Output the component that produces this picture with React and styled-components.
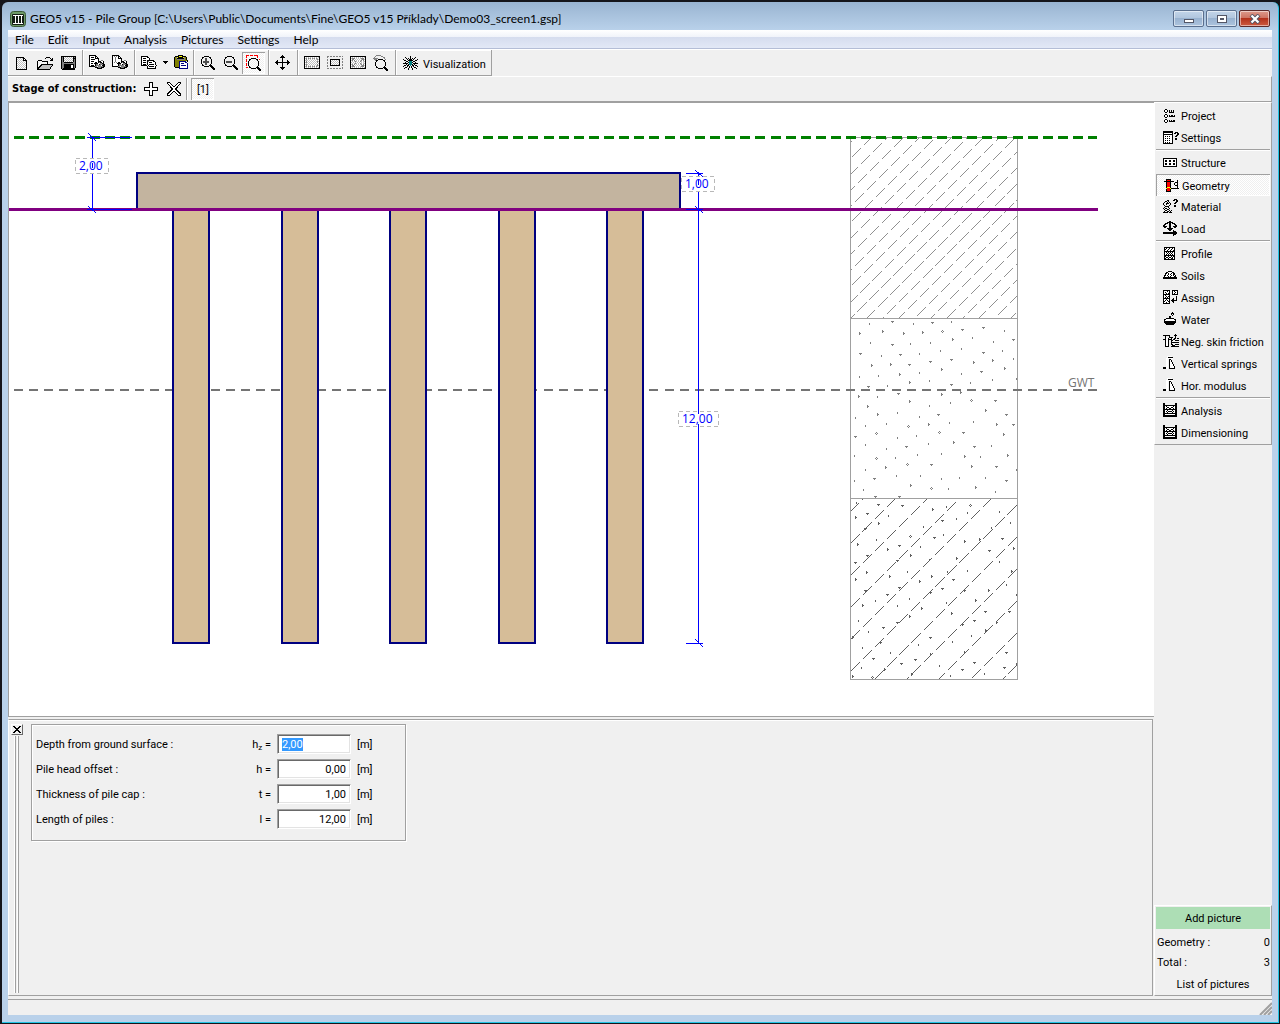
import React, { useEffect, useRef } from "react";
import styled, { createGlobalStyle, css } from "styled-components";

const face = "#f0f0f0";
const shade = "#a0a0a0";
const uiFont = `Roboto, "Liberation Sans", sans-serif`;
const shellFont = `Lato, Roboto, sans-serif`;
const drawingFont = `"Open Sans", "Noto Sans", sans-serif`;
const dither = `repeating-conic-gradient(#ffffff 0 25%, #efefef 0 50%) 0 0 / 2px 2px`;

const GlobalStyle = createGlobalStyle`
  *, *::before, *::after { box-sizing: border-box; }
  body { margin: 0; background: #15151a; font: 11px/14px ${uiFont}; color: #000; }
  button, input { font: inherit; color: inherit; margin: 0; }
  button { background: none; border: 0; padding: 0; cursor: default; }
`;

/* ---------- window shell ---------- */

const Desktop = styled.div`
  height: 100vh;
  min-height: 640px;
  display: flex;
  padding: 2px 1px 1px 2px;
  background: #15151a;
`;

const WindowFrame = styled.div`
  flex: 1;
  min-width: 0;
  display: flex;
  flex-direction: column;
  padding: 0 6px 7px;
  border-right: 1px solid #22c4e4;
  border-bottom: 1px solid #22c4e4;
  border-radius: 6px 6px 0 0;
  background: linear-gradient(#99b4d1 0, #b9d1ea 28px);
`;

const TitleBar = styled.header`
  display: flex;
  align-items: center;
  gap: 4px;
  height: 28px;
  padding: 5px 2px 0;
  font: 12px/16px ${shellFont};
`;

const TitleText = styled.h1`
  flex: 1;
  margin: 0;
  font: inherit;
  white-space: nowrap;
  overflow: hidden;
`;

const CaptionButtons = styled.div`
  display: flex;
  gap: 2px;
`;

const CaptionButton = styled.button`
  display: grid;
  place-items: center;
  width: 31px;
  height: 17px;
  border: 1px solid ${(p) => (p.$danger ? "#5c2a2a" : "#5a6f8e")};
  border-radius: 2px;
  box-shadow: inset 0 0 0 1px rgba(255, 255, 255, 0.5);
  background: ${(p) =>
    p.$danger
      ? "linear-gradient(#dc9a8c 0, #cf7463 45%, #b3321c 50%, #cd5a40 100%)"
      : "linear-gradient(#c3d5e9 0, #b1c6de 45%, #98b2d0 50%, #adc4de 100%)"};
`;

const MenuBar = styled.nav`
  display: flex;
  height: 20px;
  border-bottom: 1px solid #ffffff;
  box-shadow: inset 0 -1px 0 #b4bdd6;
  background: linear-gradient(#ffffff 0, #f0f3fa 7px, #d5dcee 7px, #e2e8f6 18px);
  font: 12px/18px ${shellFont};
`;

const MenuItem = styled.button`
  padding: 1px 7px 0;
`;

/* ---------- toolbars ---------- */

const ToolBar = styled.div`
  display: flex;
  height: 26px;
  background: ${face};
`;

const ToolGroup = styled.div`
  display: flex;
  align-items: center;
  padding: 0 ${(p) => (p.$tight ? 0 : 3)}px 0 2px;
  border-right: 1px solid ${shade};
  border-bottom: 1px solid ${shade};
  box-shadow: inset 1px 1px 0 #ffffff;
`;

const pressed = css`
  background: ${dither};
  box-shadow: inset 1px 1px 0 ${shade}, inset -1px -1px 0 #ffffff;
`;

const ToolButton = styled.button`
  display: flex;
  align-items: center;
  justify-content: center;
  gap: 4px;
  width: ${(p) => (p.$wide ? "auto" : p.$narrow ? "10px" : "23px")};
  height: 22px;
  padding: ${(p) => (p.$wide ? "2px 2px 0 5px" : "0")};
  ${(p) => p.$pressed && pressed}
`;

const StageBar = styled.div`
  display: flex;
  align-items: center;
  height: 26px;
  padding-left: 4px;
  border-top: 1px solid #ffffff;
  border-right: 1px solid ${shade};
  border-bottom: 1px solid ${shade};
  background: ${face};
`;

const StageLabel = styled.span`
  padding-right: 3px;
  font: bold 11px/14px "DejaVu Sans Condensed", "Noto Sans", sans-serif;
`;

const StageRule = styled.span`
  width: 2px;
  height: 22px;
  margin: 0 3px 0 1px;
  border-left: 1px solid ${shade};
  border-right: 1px solid #ffffff;
`;

/* ---------- work area ---------- */

const WorkArea = styled.div`
  flex: 1;
  min-height: 0;
  display: grid;
  grid-template-columns: minmax(0, 1fr) 118px;
  background: ${face};
`;

const MainColumn = styled.main`
  display: flex;
  flex-direction: column;
  min-height: 0;
`;

const Canvas = styled.section`
  flex: 1;
  min-height: 0;
  display: flex;
  border: 1px solid ${shade};
  border-right: 0;
  background: #ffffff;
`;

const Drawing = styled.svg`
  flex: 1;
  min-width: 0;
  min-height: 0;
  display: block;
  font: 12px ${drawingFont};
`;

const InputPanel = styled.section`
  flex: none;
  display: flex;
  align-items: stretch;
  gap: 8px;
  height: 277px;
  margin: 2px 1px 0 0;
  padding: 4px 3px 2px 2px;
  border: 1px solid ${shade};
  border-left-color: #ffffff;
  box-shadow: inset 0 1px 0 #ffffff;
`;

const Rail = styled.div`
  display: flex;
  flex-direction: column;
  align-items: center;
  gap: 1px;
  width: 12px;
`;

const CloseButton = styled.button`
  display: grid;
  place-items: center;
  width: 12px;
  height: 11px;
  border: 1px solid;
  border-color: #ffffff #696969 #696969 #ffffff;
`;

const Grip = styled.div`
  flex: 1;
  width: 6px;
  background: linear-gradient(90deg, #ffffff 1px, ${shade} 1px 2px, ${face} 2px 3px, #ffffff 3px 4px, ${shade} 4px 5px, ${face} 5px);
`;

const FieldGroup = styled.fieldset`
  display: flex;
  flex-direction: column;
  gap: 5px;
  align-self: flex-start;
  width: 375px;
  min-width: 0;
  margin: 0;
  padding: 9px 4px 11px;
  border: 1px solid ${shade};
  box-shadow: inset 1px 1px 0 #ffffff, 1px 1px 0 #ffffff;
`;

const FieldRow = styled.div`
  display: grid;
  grid-template-columns: 168px 61px 74px auto;
  column-gap: 6px;
  align-items: center;
  height: 20px;
`;

const FieldLabel = styled.label`
  padding-top: 2px;
`;

const FieldNote = styled.span`
  padding-top: 2px;
  text-align: ${(p) => (p.$end ? "right" : "left")};
  sub { font-size: 8px; line-height: 1px; vertical-align: -2px; }
`;

const NumberField = styled.input`
  width: 100%;
  height: 20px;
  padding: 1px 4px 0;
  border: 1px solid;
  border-color: ${shade} #ffffff #ffffff ${shade};
  box-shadow: inset 1px 1px 0 #696969, inset -1px -1px 0 #e3e3e3;
  border-radius: 0;
  outline: 0;
  background: #ffffff;
  text-align: ${(p) => (p.$editing ? "left" : "right")};
  &::selection { background: #3399ff; color: #ffffff; }
`;

/* ---------- side column ---------- */

const SideColumn = styled.aside`
  display: flex;
  flex-direction: column;
  justify-content: space-between;
  min-height: 0;
`;

const SidePanel = styled.div`
  padding: 2px 1px 0;
  border: 1px solid;
  border-color: #ffffff ${shade} ${shade} #ffffff;
`;

const ModeGroup = styled.div`
  & + & {
    padding-top: 3px;
    background: linear-gradient(${shade} 1px, #ffffff 1px, #ffffff 2px, transparent 2px);
  }
`;

const ModeButton = styled.button`
  display: flex;
  align-items: center;
  gap: 2px;
  width: 100%;
  height: 22px;
  padding: ${(p) => (p.$active ? "1px 0 0 8px" : "0 0 0 7px")};
  white-space: nowrap;
  ${(p) => p.$active && pressed}
`;

const ModeLabel = styled.span`
  padding-top: 2px;
`;

const PicturePanel = styled(SidePanel)`
  display: flex;
  flex-direction: column;
  padding: 1px 1px 0;
`;

const AddPicture = styled.button`
  height: 22px;
  padding-top: 2px;
  margin-bottom: 3px;
  background: #addeb5;
`;

const CountRow = styled.div`
  display: flex;
  justify-content: space-between;
  align-items: center;
  height: 20px;
  padding: 2px 0 0 1px;
`;

const ListButton = styled.button`
  height: 23px;
  padding-top: 2px;
`;

const StatusBar = styled.footer`
  display: flex;
  justify-content: flex-end;
  align-items: flex-end;
  height: 19px;
  border-top: 3px solid ${face};
  background: linear-gradient(${shade} 1px, ${face} 1px);
`;

const Glyph = styled.svg`
  flex: none;
  display: block;
  fill: none;
  stroke: #000;
  stroke-width: 1;
  shape-rendering: ${(p) => (p.$smooth ? "auto" : "crispEdges")};
`;

/* ---------- icons ---------- */

const Icon = ({ children, w = 16, h = 16, smooth }) => (
  <Glyph width={w} height={h} viewBox={`0 0 ${w} ${h}`} aria-hidden="true" $smooth={smooth}>
    {children}
  </Glyph>
);

const inks = {
  "#": "#000000", g: "#808080", d: "#505050", w: "#ffffff", r: "#ff0000",
  y: "#ffff00", t: "#008080", o: "#808000", b: "#000080", s: "#c0c0c0",
};

// Bitmap icon: each string is one row of pixels, "." is transparent.
const Bits = ({ rows, w = 16, h = 16 }) => {
  const out = [];
  rows.forEach((row, y) => {
    let x = 0;
    while (x < row.length) {
      const c = row[x];
      let end = x + 1;
      while (end < row.length && row[end] === c) end += 1;
      if (inks[c]) out.push(<rect key={`${x}-${y}`} x={x} y={y} width={end - x} height={1} fill={inks[c]} stroke="none" />);
      x = end;
    }
  });
  return <Icon w={w} h={h}>{out}</Icon>;
};

const bitmaps = {
  page: [
    "", "", "..########......", "..#wswsws##.....", "..#swswsw#w#....", "..#wswsws####...", "..#swswswsws#...",
    "..#wswswswsw#...", "..#swswswsws#...", "..#wswswswsw#...", "..#swswswsws#...", "..#wswswswsw#...", "..#swswswsws#...",
    "..#wswswswsw#...", "..###########...",
  ],
  open: [
    "", "", ".........####...", "........#....#.#", "..............##", ".####........###", "#w.w.######.....",
    "#.w.w.w.w.#.....", "#w.w.w.w.w#.....", "#.w.############", "#w.##ssssssssss#", "#.##ssssssssss#.", "###ssssssssss#..",
    "##sssssssssss#..", "#############...",
  ],
  save: [
    "", ".###############", ".#g#wswswswsw#g#", ".#g#swswswsws###", ".#g#wswswswsw#g#", ".#g#swswswsws#g#", ".#g#wswswswsw#g#",
    ".#gg#########gg#", ".#ggggggggggggg#", ".#gg##########g#", ".#gg#######ww#g#", ".#gg#######ww#g#", ".#gg#######ww#g#",
    ".#g############.", "..#############.",
  ],
  print: [
    "#######.........", "#wwwww##........", "#w###w#w#.......", "#wwwww####......", "#w####www#......", "#wwwwwwww#..gg..",
    "#w###wwww###ww#.", "#wwwww##w#g##w#.", "#w##w####wwgg##.", "#wwwww#ggw#ggg##", "#w###w#gggggw###", "######ggwggggg##",
    "......###ggg###.", "........#####...",
  ],
  printStage: [
    "#######.........", "#wgwgw##........", "#wwgww#w#.......", "#wwgww####......", "#wwgwwwww#......", "#wwgwwwww#..gg..",
    "#wwgwwwww###ww#.", "#wgwgw##w#g##w#.", "#wwww####wwgg##.", "#wwwww#ggw#ggg##", "#wwwww#gggggw###", "######ggwggggg##",
    "......###ggg###.", "........#####...",
  ],
  copy: [
    "", "#######.........", "#wwwww##........", "#w###www#.......", "#wwwwwww#.......", "#w###.#######...", "#wwww.#gwwww##..",
    "#w###.#w###www#.", "#wwww.#wwwwwww#.", "#w###.#w#####w#.", "######.#wwwwwww#", "......#w#####w#.", "......#wwwwwww#.",
    "......#########.",
  ],
  paste: [
    "....#####.......", ".####yyy####....", "#ogy#####ygo#...", "#og#######go#...", "#ooggggggggo#...", "#oooooooooooo#..", "#oooobbbbbbb.#..",
    "#oooobwwwwwbb...", "#oooobwbbbwwwb..", "#oooobwwwwwwwb..", "#oooobwbbbbbwb..", "#oooobwwwwwwwb..", ".####bwwwwwwwb..",
    ".....bbbbbbbbb..",
  ],
  zoomIn: [
    "", "....#####.......", "..##.....##.....", "..#..dd...#.....", ".#...dd....#....", ".#...dd....#....", ".#.dddddd..#....",
    ".#.dddddd..#....", ".#...dd....#....", "..#..dd...#.....", "..##.....###....", "....#####.###...", "...........###..",
    "............###.", ".............##.",
  ],
  zoomOut: [
    "", "....#####.......", "..##.....##.....", "..#.......#.....", ".#.........#....", ".#.........#....", ".#.dddddd..#....",
    ".#.dddddd..#....", ".#.........#....", "..#.......#.....", "..##.....###....", "....#####.###...", "...........###..",
    "............###.", ".............##.",
  ],
  zoomBox: [
    "rrr.rrr.rrrr....", "r..........r....", "r..........r....", ".....#####......", "r..##.....##.r..", "r..#.......#....", "r.#.........#...",
    "..#.........#...", "r.#.........#...", "r.#.........#...", "r.#.........#...", "...#.......#....", "rr.##.....###...",
    ".....#####.###..", "............###.", ".............##.",
  ],
  zoomBack: [
    "...ggggg........", "..g.....gg......", ".g........gg....", "ggggg......g....", ".ggg.#####..g...", "..g##.....##....", "...#.......#....",
    "..#.........#...", "..#.........#...", "..#.........#...", "..#.........#...", "...#.......#....", "...##.....###...",
    ".....#####.###..", "............###.", ".............##.",
  ],
  move: [
    ".......#........", "......###.......", ".....#####......", ".......#........", ".......#........", "..#....#....#...", ".##....#....##..",
    "###############.", ".##....#....##..", "..#....#....#...", ".......#........", ".......#........", ".....#####......", "......###.......",
    ".......#........",
  ],
  window: [
    "", "################", "#wswswswswswsws#", "#sgwgsgwgsgwgsw#", "#wgwswswswswsgs#", "#ssswswswswswsw#", "#wgwswswswswsgs#",
    "#sgswswswswswgw#", "#wswswswswswsws#", "#sgswswswswswgw#", "#wgwswswswswsgs#", "#sgwgsgwgsgwgsw#", "#wswswswswswsws#",
    "################",
  ],
  focus: [
    "", "gg.gg.gg.gg.gg.g", "g...............", "...............g", "g..##########..g", "g..#wswswsws#...", "...#swswswsw#..g",
    "g..#wswswsws#..g", "g..#swswswsw#...", "...#wswswsws#..g", "g..##########..g", "g...............", "...............g",
    "gg.gg.gg.gg.gg.g",
  ],
  expand: [
    "", "################", "#wswswswswswsws#", "#sgggwswswsgggw#", "#wggwswswswsggs#", "#sgwgwswswsgwgw#", "#wswsgswswgswss#",
    "#swswswswswswsw#", "#wswsgswswgswss#", "#sgwgwswswsgwgw#", "#wggwswswswsggs#", "#sgggwswswsgggw#", "#wswswswswswsws#",
    "################",
  ],
  visual: [
    ".......#........", "..#....#....#...", "...#.#.#.#.#....", "#...#.###.#...#.", ".##..#####..##..", "...##.ttt.##....", "..#..#ttt#..#...",
    "#####.ttt.#####.", "...#.#ttt#.#....", ".##.##.t.##.##..", "#...#.#.#.#...#.", "..##..#.#..##...", ".#...#...#...#..",
    ".....#...#......",
  ],
  project: [
    "", "..##............", ".#ww#.#.#.#.....", ".#ww#.#.#.#.....", "..##..#####.....", "................", "..##............", ".#ww#.#.##.#....",
    ".#ww#.######....", "..##............", "................", "..##............", ".#ww#.#.#.##....", ".#ww#.######....", "..##............",
  ],
  settings: [
    "", "##########......", "##########..###.", "#wwwwwwww#.##.##", "##########....##", "#wwwwwwww#...##.", "#w#w#w#ww#..##..",
    "#wwwwwwww#......", "#w#w#w#ww#..##..", "#wwwwwwww#..##..", "#w#w#w#ww#......", "#wwwwwwww#......", "#w#w#w#ww#......", "##########......",
  ],
  structure: [
    "", "", "", "##############..", "#wwwwwwwwwwww#..", "#w##ww##ww##w#..", "#w##ww##ww##w#..", "#wwwwwwwwwwww#..", "#w##ww##ww##w#..",
    "#w##ww##ww##w#..", "#wwwwwwwwwwww#..", "##############..",
  ],
  geometry: [
    "", "..#####.........", "..#rrr#......#..", "##########...#..", "..#rrr#....###..", "..#rrr#...#..#..", "..#rrr#...#..#..",
    "..#rrr#....###..", "..#rrr#......#..", "..#yyy#......#..", "..yrrry########.", "..#rrr#.........", "..#rrr#.........", "..#####.........",
  ],
  material: [
    "...........###..", "....##....##.##.", "..##.#.......##.", ".#..#.#.....##..", "#..###.#...##...", "#..#...#........", ".#....#....##...",
    "..####.....##...", ".#...#..........", "#.##..#.........", ".#..##..........", "..##..#.#.......", ".#..##.#........", "#####.###.......",
  ],
  load: [
    "......##........", "....######......", "..###.##.###....", ".##...##...##...", "##....##....##..", "####..##..####..", ".##...##...##...",
    "....######......", ".....####.......", "......##..#.....", "..........###...", "##############..", "##############..", "..........###...",
    "..........#.....",
  ],
  profile: [
    "", ".###########....", ".#w#ww#ww#w#....", ".##ww#ww#ww#....", ".#ww#ww#ww##....", ".###########....", ".#w#w#w#w#w#....", ".#ww#w#w#ww#....",
    ".#w#w#w#w#w#....", ".###########....", ".##ww#ww#w##....", ".#w##w##w#w#....", ".##ww#ww##w#....", ".###########....",
  ],
  soils: [
    "", "", "", ".....####.......", "...##wwww##.....", "..##w#ww#w##....", "..#ww#w#ww##....", ".##w#www#w#w#...", ".#www#w#www##...",
    "##############..", "##############..",
  ],
  assign: [
    "#######..######.", "#www#w#..#w#ww#.", "#w#www#..#ww#w#.", "#ww#w##..#w#ww#.", "#######..######.", "#w#www#.........", "#ww#w##......#..",
    "#w#w#w#......#..", "#######...#..#..", "#ww#ww#..##..#..", "#w#w#w#.######..", "##www##..##.....", "#ww#ww#...#.....", "#######.........",
  ],
  water: [
    ".........#......", "........###.....", "........#w#.....", ".........#......", "......##........", "......##........", "...########.....",
    ".##wwwwwwww##...", ".#wwwwwwwwww#...", ".############...", ".############...", "..##########....", "...########.....", "................",
  ],
  friction: [
    "............#...", "#######....###..", "..#...#.....#...", "..#...####..#...", "..#ww#..#..##.##", "###ww####.##....", "..#ww#..##..####",
    "..#ww#..#.......", "..#ww#..########", "..#ww#..#.......", "..#ww#..##..####", "..#ww#...###....", "..####..########",
  ],
  springs: [
    "....wwwww.......", "....w#####......", "...wwwwwww......", "...ww.##........", "...ww.#w#.......", "...ww.#w#.......", "...ww.#ww#......",
    "...ww.#ww#......", "...ww.#www#.....", "...ww.#www#.....", "...ww.#wwww#....", "###ww.#wwww#....", "###ww.######....",
  ],
  analysis: [
    "##..........##..", "##..........##..", "##############..", "##w#wwwwww#w##..", "##ww##ww##ww##..", "##w#ww##ww#w##..", "##############..",
    "##ww#wwww#ww##..", "##w#w####w#w##..", "##ww#wwww#ww##..", "##############..", "##wwwwwwwwww##..", "##############..", "##############..",
  ],
};

const AppIcon = () => (
  <Icon smooth>
    <rect x="0.500" y="0.500" width="15" height="15" rx="3" fill="#6f9a68" stroke="#3a5a38" />
    <rect x="2" y="3" width="12" height="11" rx="1" fill="#141c14" stroke="none" />
    <path d="M3 4.500h10M3 12.500h10M5 5v7M8 5v7M11 5v7" stroke="#fff" shapeRendering="crispEdges" />
  </Icon>
);

/* ---------- data ---------- */

const menus = ["File", "Edit", "Input", "Analysis", "Pictures", "Settings", "Help"];

const modes = [
  [["Project", "project"], ["Settings", "settings"]],
  [["Structure", "structure"], ["Geometry", "geometry"], ["Material", "material"], ["Load", "load"]],
  [
    ["Profile", "profile"], ["Soils", "soils"], ["Assign", "assign"], ["Water", "water"],
    ["Neg. skin friction", "friction"], ["Vertical springs", "springs"], ["Hor. modulus", "springs"],
  ],
  [["Analysis", "analysis"], ["Dimensioning", "analysis"]],
];

const fields = [
  { id: "depth", label: "Depth from ground surface :", symbol: <>h<sub>z</sub> =</>, value: "2,00" },
  { id: "offset", label: "Pile head offset :", symbol: "h =", value: "0,00" },
  { id: "cap", label: "Thickness of pile cap :", symbol: "t =", value: "1,00" },
  { id: "piles", label: "Length of piles :", symbol: "l =", value: "12,00" },
];

// Soil symbols: d = grain, v / r = stone pointing down / right, o = pebble.
const sand = `d19,5 v42,3 d63,5 v82,4 d101,3 v112,11 v133,9 d154,12 r9,15 r32,13 r53,15 r72,14 o92,13 r102,21 d122,19 v163,21 d143,23
d20,24 v42,26 d60,25 d80,24 d111,30 d90,32 d152,32 v10,35 d31,37 v50,36 d69,35 v133,34 v101,41 v80,43 r142,42 r123,44 d163,40 r21,47
r40,46 v59,46 r91,51 d69,54 d111,55 v131,53 r154,50 d9,58 d28,57 r49,56 d79,62 d142,61 d166,60 r59,64 d120,64 v101,66 v18,68 d37,67
v48,75 r91,76 r110,74 r8,78 d27,78 r59,83 d79,87 o121,82 v145,82 d100,84 r17,88 d47,94 r135,92 v156,96 v88,96 r27,96 d5,99 d69,98
d123,103 d99,104 d36,105 r78,106 r146,106 v163,106 o58,108 v5,118 d15,107 o26,115 d47,119 d66,117 o89,114 v113,114 r153,116 r103,124
d78,125 v56,128 v124,128 d141,127 d15,126 d36,130 r114,138 d91,135 d67,136 d130,138 r157,137 d4,137 o26,140 d45,139 o57,146 v81,146
v146,148 r121,148 d15,151 r35,149 d166,151 d46,157 d70,157 d91,160 v24,160 d4,162 d109,159 d135,159 v156,162 r60,167 o81,170 d98,170
r125,169 d13,171 d145,173 v25,178 v49,178`;

const clayeySand = `v28,6 v52,7 o120,7 d6,4 v17,15 r5,19 d38,17 r82,11 d96,8 d149,13 d117,14 d106,20 v92,22 r28,25 v15,30 d73,28 d160,24
d141,29 v152,40 o60,38 v84,39 d93,36 d26,41 r7,46 v49,47 d70,48 r114,43 r129,41 v139,52 r163,50 v17,57 r37,51 v5,64 r60,57 v47,62 d79,61
r106,60 d149,63 r16,74 r39,78 d57,73 r81,78 d97,73 v103,81 d117,72 r161,73 r5,81 r69,83 v49,89 v92,90 v15,92 v37,96 v80,94 r114,92
r138,92 d156,86 r12,107 d25,102 r125,102 d59,100 d47,107 r71,110 d96,104 v135,113 d166,96 r101,115 r59,118 v159,113 v124,122 d8,122
v47,124 v33,129 v112,126 r135,132 r146,124 d18,133 v80,139 d102,143 d121,137 r2,139 r30,144 d12,149 d40,154 d68,146 v23,160 r114,154
r80,156 v156,154 v65,161 v51,165 v124,164 v112,171 v154,169 d11,169 r61,176 r34,171 d89,167 o22,179 r2,178 d100,177 d134,175 d166,165`;

const symbolPaths = {
  d: "h1v2h-1z",
  v: "m-1 0h3v1h-1v1h-1v-1h-1z",
  r: "m0 -1h1v1h1v1h-1v1h-1z",
  o: "m0 -1h1v1h-1z m-1 1h1v1h-1z m2 0h1v1h-1z m-1 1h1v1h-1z",
};

const toPath = (text, dx, dy) =>
  text
    .split(/\s+/)
    .map((item) => {
      const [x, y] = item.slice(1).split(",").map(Number);
      return `M${x + dx} ${y + dy}${symbolPaths[item[0]]}`;
    })
    .join("");

const pileLeft = [173, 282, 390, 499, 607];

const hatch = (first, step, top, bottom, phase) => {
  const lines = [];
  let i = 0;
  for (let c = first; c < 1018 + bottom; c += step) {
    lines.push(<path key={c} d={`M${c - bottom} ${bottom}L${c - top} ${top}`} strokeDashoffset={-((i * phase) % 17)} />);
    i += 1;
  }
  return lines;
};

const Dimension = ({ x, y, w, label }) => (
  <g>
    <rect x={x + 0.5} y={y + 0.5} width={w} height="15" fill="#fff" stroke="#b8b8b8" strokeDasharray="4 3" shapeRendering="crispEdges" />
    <text x={x + 4} y={y + 12} fill="#0000ff">{label}</text>
  </g>
);

const PileDrawing = () => (
  <Drawing viewBox="9 103 1145 613" preserveAspectRatio="xMinYMin meet" role="img" aria-label="Pile group section">
    <defs>
      <clipPath id="layer1"><rect x="851" y="138" width="166" height="180" /></clipPath>
      <clipPath id="layer3"><rect x="851" y="499" width="166" height="180" /></clipPath>
    </defs>
    <g clipPath="url(#layer1)" stroke="#909090" strokeDasharray="13 4" shapeRendering="crispEdges">{hatch(993, 16, 137, 318, 7)}</g>
    <path d={toPath(sand, 850, 318)} fill="#808080" shapeRendering="crispEdges" />
    <g clipPath="url(#layer3)" stroke="#606060" strokeDasharray="13 4" shapeRendering="crispEdges">{hatch(1362, 32, 498, 680, 6)}</g>
    <path d={toPath(clayeySand, 850, 498)} fill="#606060" shapeRendering="crispEdges" />
    <path d="M850.500 137.500h167v542h-167zM850.500 318.500h167M850.500 498.500h167" fill="none" stroke="#a0a0a0" shapeRendering="crispEdges" />
    <g fill="none" shapeRendering="crispEdges">
      <path d="M14 137.500H1097" stroke="#008000" strokeWidth="3" strokeDasharray="10 5.130" />
      <path d="M14 390H1097" stroke="#747474" strokeWidth="2" strokeDasharray="9 6.130" />
      {pileLeft.map((x) => (
        <rect key={x} x={x} y="209" width="36" height="434" fill="#d6bd98" stroke="#000080" strokeWidth="2" />
      ))}
      <rect x="137" y="173" width="543" height="37" fill="#c3b49f" stroke="#000080" strokeWidth="2" />
      <path d="M9 209.500H1098" stroke="#800080" strokeWidth="3" />
      <path d="M92.500 137v72M87 137.500h45M87 209.500h45M698.500 173v470M686 173.500h17M686 209.500h17M686 643.500h17" stroke="#0000ff" />
      <path d="M88 133l8 8M88 206l8 7M695 170l8 7M695 206l8 7M695 639l8 8" stroke="#0000ff" />
    </g>
    <Dimension x={75} y={158} w={33} label="2,00" />
    <Dimension x={681} y={176} w={33} label="1,00" />
    <Dimension x={678} y={411} w={40} label="12,00" />
    <path d="M92.500 163v5M698.500 180v5M698.500 411v3M698.500 424v3" stroke="#0000ff" shapeRendering="crispEdges" />
    <text x="1068" y="387" fill="#747474">GWT</text>
  </Drawing>
);

/* ---------- composition ---------- */

const Tool = ({ name, label, children, ...rest }) => (
  <ToolButton type="button" aria-label={label} {...rest}>
    {children || <Bits rows={bitmaps[name]} />}
  </ToolButton>
);

export default function App() {
  const editing = useRef(null);
  useEffect(() => {
    editing.current.focus();
    editing.current.select();
  }, []);

  return (
    <>
      <GlobalStyle />
      <Desktop>
        <WindowFrame>
          <TitleBar>
            <AppIcon />
            <TitleText>GEO5 v15 - Pile Group [C:\Users\Public\Documents\Fine\GEO5 v15 Příklady\Demo03_screen1.gsp]</TitleText>
            <CaptionButtons>
              <CaptionButton type="button" aria-label="Minimize">
                <Icon w={12} h={10}><rect x="1.500" y="5.500" width="9" height="3" fill="#fff" stroke="#535666" /></Icon>
              </CaptionButton>
              <CaptionButton type="button" aria-label="Maximize">
                <Icon w={12} h={10}>
                  <rect x="1.500" y="1.500" width="9" height="7" fill="#fff" stroke="#535666" />
                  <rect x="4.500" y="4.500" width="3" height="1" stroke="#535666" />
                </Icon>
              </CaptionButton>
              <CaptionButton type="button" aria-label="Close" $danger>
                <Icon w={12} h={10} smooth>
                  <path d="M2 1l8 8M10 1l-8 8" stroke="#535666" strokeWidth="4" />
                  <path d="M2.500 1.500l7 7M9.500 1.500l-7 7" stroke="#fff" strokeWidth="2.200" />
                </Icon>
              </CaptionButton>
            </CaptionButtons>
          </TitleBar>

          <MenuBar>
            {menus.map((m) => <MenuItem key={m} type="button">{m}</MenuItem>)}
          </MenuBar>

          <ToolBar>
            <ToolGroup>
              <Tool name="page" label="New" />
              <Tool name="open" label="Open" />
              <Tool name="save" label="Save" />
            </ToolGroup>
            <ToolGroup>
              <Tool name="print" label="Print" />
              <Tool name="printStage" label="Print stage" />
            </ToolGroup>
            <ToolGroup $tight>
              <Tool name="copy" label="Copy" />
              <Tool label="Copy options" $narrow>
                <Icon w={5} h={3}><path d="M0 0h5v1h-1v1h-1v1h-1v-1h-1v-1h-1z" fill="#000" stroke="none" /></Icon>
              </Tool>
              <Tool name="paste" label="Paste" />
            </ToolGroup>
            <ToolGroup>
              <Tool name="zoomIn" label="Zoom in" />
              <Tool name="zoomOut" label="Zoom out" />
              <Tool name="zoomBox" label="Zoom window" $pressed />
            </ToolGroup>
            <ToolGroup>
              <Tool name="move" label="Pan" />
            </ToolGroup>
            <ToolGroup>
              <Tool name="window" label="Fit sheet" />
              <Tool name="focus" label="Fit selection" />
              <Tool name="expand" label="Fit all" />
              <Tool name="zoomBack" label="Previous view" />
            </ToolGroup>
            <ToolGroup>
              <ToolButton type="button" $wide><Bits rows={bitmaps.visual} /><ModeLabel>Visualization</ModeLabel></ToolButton>
            </ToolGroup>
          </ToolBar>

          <StageBar>
            <StageLabel>Stage of construction:</StageLabel>
            <Tool label="Add stage">
              <Icon><path d="M6.500 1.500h3v5h5v3h-5v5h-3v-5h-5v-3h5z" fill="#fff" /></Icon>
            </Tool>
            <Tool label="Remove stage">
              <Icon><path d="M1.500 1.500h2l4.500 4.500 4.500-4.500h2v1l-5 5.500 5 5v1.500h-2l-4.500-4.500-4.500 4.500h-2v-1.500l5-5-5-5.500z" fill="#fff" /></Icon>
            </Tool>
            <StageRule />
            <ToolButton type="button" $pressed><ModeLabel>[1]</ModeLabel></ToolButton>
          </StageBar>

          <WorkArea>
            <MainColumn>
              <Canvas><PileDrawing /></Canvas>
              <InputPanel>
                <Rail>
                  <CloseButton type="button" aria-label="Close panel">
                    <Icon w={8} h={7}><path d="M0 0h2v1h1v1h2v-1h1v-1h2v1h-1v1h-1v1h-1v1h1v1h1v1h1v1h-2v-1h-1v-1h-2v1h-1v1h-2v-1h1v-1h1v-1h1v-1h-1v-1h-1v-1h-1z" fill="#000" stroke="none" /></Icon>
                  </CloseButton>
                  <Grip />
                </Rail>
                <FieldGroup>
                  {fields.map((f, i) => (
                    <FieldRow key={f.id}>
                      <FieldLabel htmlFor={f.id}>{f.label}</FieldLabel>
                      <FieldNote $end>{f.symbol}</FieldNote>
                      <NumberField id={f.id} type="text" defaultValue={f.value} $editing={i === 0} ref={i === 0 ? editing : null} />
                      <FieldNote>[m]</FieldNote>
                    </FieldRow>
                  ))}
                </FieldGroup>
              </InputPanel>
            </MainColumn>

            <SideColumn>
              <SidePanel>
                {modes.map((group) => (
                  <ModeGroup key={group[0][0]}>
                    {group.map(([label, icon]) => (
                      <ModeButton key={label} type="button" $active={label === "Geometry"}>
                        <Bits rows={bitmaps[icon]} /><ModeLabel>{label}</ModeLabel>
                      </ModeButton>
                    ))}
                  </ModeGroup>
                ))}
              </SidePanel>
              <PicturePanel>
                <AddPicture type="button">Add picture</AddPicture>
                <CountRow><span>Geometry :</span><span>0</span></CountRow>
                <CountRow><span>Total :</span><span>3</span></CountRow>
                <ListButton type="button">List of pictures</ListButton>
              </PicturePanel>
            </SideColumn>
          </WorkArea>

          <StatusBar>
            <Icon w={13} h={13} smooth>
              <path d="M1 13L13 1M5 13L13 5M9 13L13 9" stroke="#a0a0a0" strokeWidth="2" />
            </Icon>
          </StatusBar>
        </WindowFrame>
      </Desktop>
    </>
  );
}
